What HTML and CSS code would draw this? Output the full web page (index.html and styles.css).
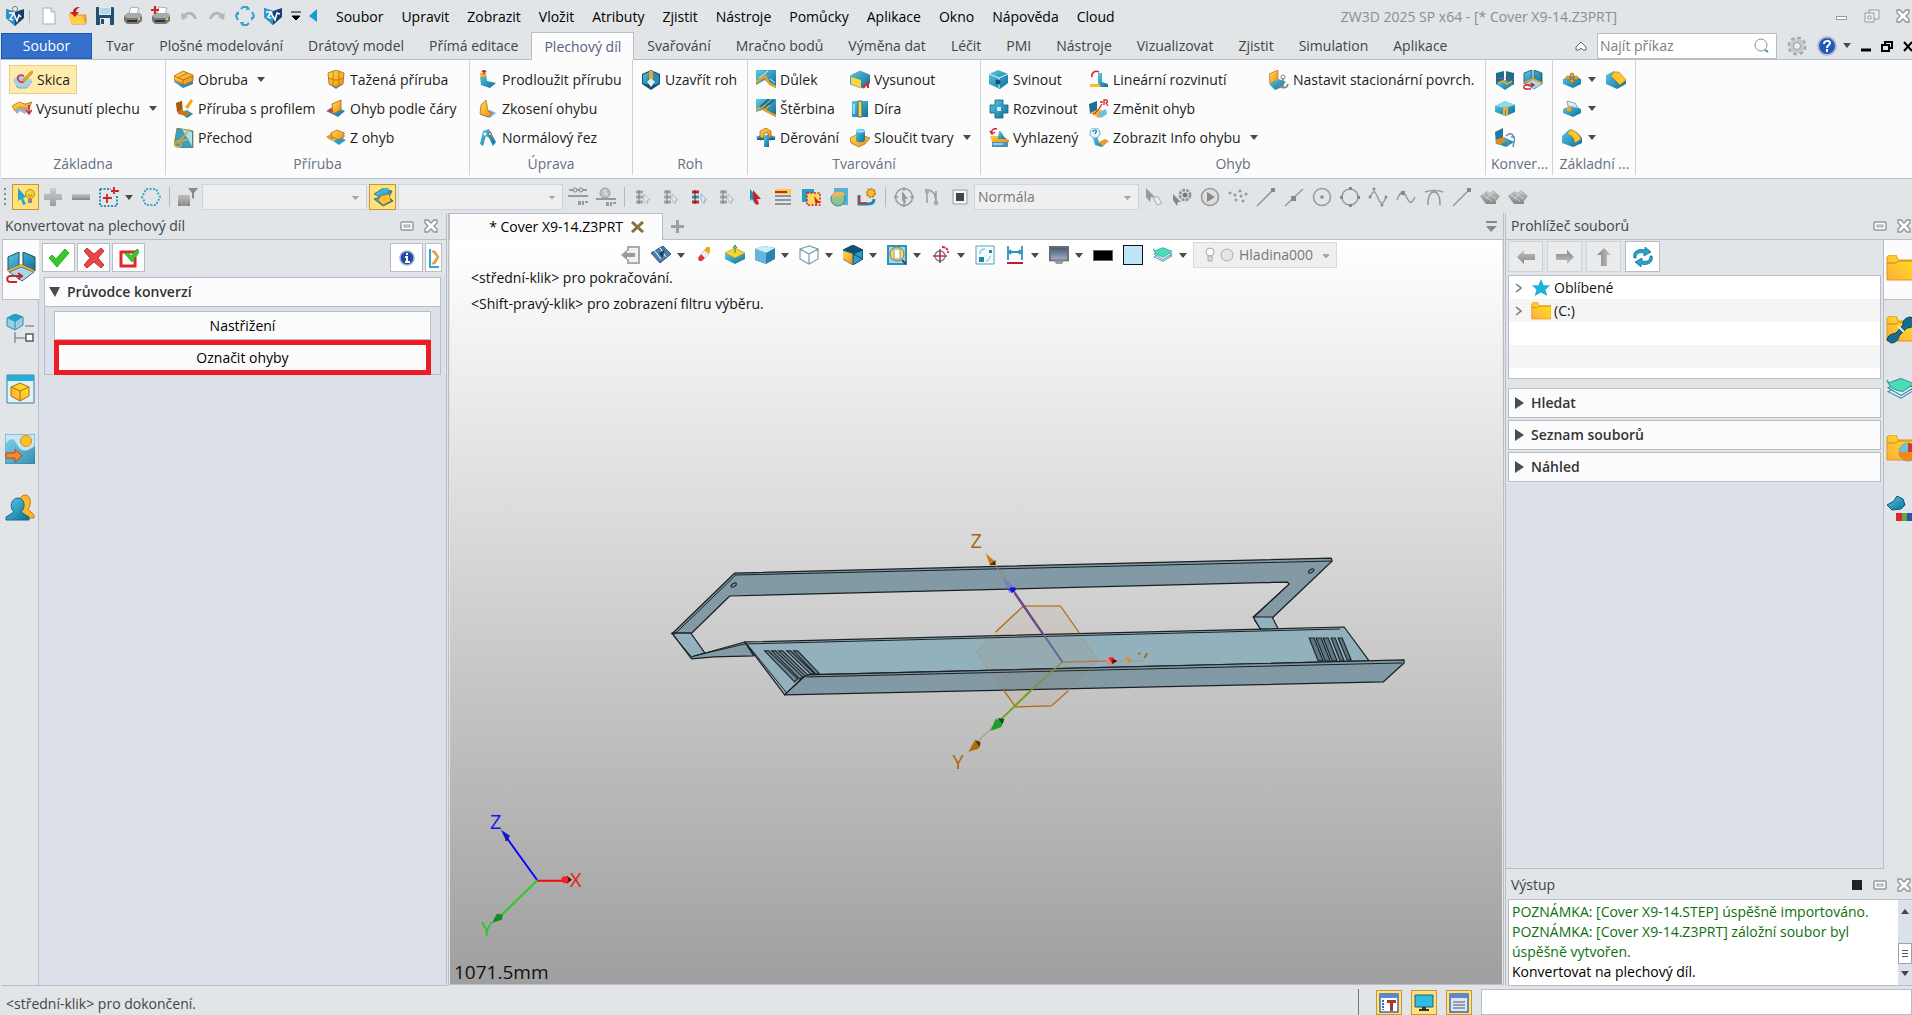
FILE: index.html
```html
<!DOCTYPE html>
<html lang="cs">
<head>
<meta charset="utf-8">
<title>ZW3D 2025 SP x64 - [* Cover X9-14.Z3PRT]</title>
<link rel="stylesheet" href="styles.css">
</head>
<body>
<svg class="sprite" aria-hidden="true">
<defs>
<linearGradient id="gt" x1="0" y1="0" x2="1" y2="1"><stop offset="0" stop-color="#5cc9e6"/><stop offset="1" stop-color="#0b6f98"/></linearGradient>
<linearGradient id="go" x1="0" y1="0" x2="1" y2="1"><stop offset="0" stop-color="#ffdc52"/><stop offset="1" stop-color="#ee8d14"/></linearGradient>
<linearGradient id="gf" x1="0" y1="1" x2="1" y2="0"><stop offset="0" stop-color="#ffab3d"/><stop offset="1" stop-color="#ffe81c"/></linearGradient>
<linearGradient id="gg" x1="0" y1="0" x2="0" y2="1"><stop offset="0" stop-color="#c4c4c4"/><stop offset="1" stop-color="#868686"/></linearGradient>
<linearGradient id="gs" x1="0" y1="0" x2="0" y2="1"><stop offset="0" stop-color="#44536f"/><stop offset="1" stop-color="#a5b2cc"/></linearGradient>
</defs>
<symbol id="logo" viewBox="0 0 20 20"><path d="M1 3l9 3 9-3v9l-9 8-9-8z" fill="#14406f"/><path d="M1 3l9 3v14l-9-8z" fill="#2e93c4"/><path d="M4 7h5l-4 6 3 1M9 8l3 7 2-6 2 2" fill="none" stroke="#fff" stroke-width="1.5"/><circle cx="10" cy="3" r="2.500" fill="#eee" stroke="#777"/></symbol>
<symbol id="zw" viewBox="0 0 20 20"><path d="M1 2l9 3 9-3v9l-9 8-9-8z" fill="#153f78"/><path d="M1 2l9 3v14l-9-8z" fill="#2c9bcf"/><path d="M3 6h5l-3 5 3 1M8 7l4 7 2-7 3 1" fill="none" stroke="#fff" stroke-width="1.6"/></symbol>
<symbol id="new" viewBox="0 0 20 20"><path d="M4 2h8l4 4v12H4z" fill="#fff" stroke="#a5adb5"/><path d="M12 2v4h4" fill="#e3e8ec" stroke="#a5adb5"/></symbol>
<symbol id="open" viewBox="0 0 20 20"><path d="M3 7h6l2 2h8v9H5z" fill="url(#go)" stroke="#d78a12" stroke-width=".8"/><path d="M1 9l4 9h14l-4-8z" fill="#ffcf45"/><path d="M13 1c-5 0-7 2-7 5H3l5 5 4-5H9c0-2 1-3 4-5z" fill="#cf1f25"/></symbol>
<symbol id="save" viewBox="0 0 20 20"><path d="M1 1h17l1 1v17H1z" fill="#24506f"/><path d="M4 1h12v8H4z" fill="#d9edf6"/><path d="M5 3h10M5 5h10M5 7h10" stroke="#8ec2da"/><path d="M5 12h10v7H5z" fill="#e8e8e8"/><path d="M6 13h3v5H6z" fill="#24506f"/></symbol>
<symbol id="print" viewBox="0 0 20 20"><path d="M6 7l2-6 8 1-2 6z" fill="#fff" stroke="#999" stroke-width=".8"/><path d="M1 10l4-3h12l2 3v5l-4 3H4l-3-3z" fill="#777"/><path d="M1 10l4-3h12l2 3-3 2H4z" fill="#aaa"/><path d="M4 14h10v2H4z" fill="#333"/><path d="M15 12h2v2h-2z" fill="#e7d54a"/></symbol>
<symbol id="printp" viewBox="0 0 20 20"><use href="#print"/><path d="M4 0v8M0 4h8" stroke="#d2232a" stroke-width="2.2"/></symbol>
<symbol id="undo" viewBox="0 0 20 20"><path d="M2 7l1 7 6-3-2-1c2-2 6-2 8 3h3C16 5 9 4 5 8z" fill="#b4b7b9"/></symbol>
<symbol id="redo" viewBox="0 0 20 20"><path d="M18 7l-1 7-6-3 2-1c-2-2-6-2-8 3H2C4 5 11 4 15 8z" fill="#b4b7b9"/></symbol>
<symbol id="cycle" viewBox="0 0 20 20"><g fill="none" stroke="#35a5c9" stroke-width="2"><path d="M6 3l2-2h4l2 2M17 6l2 4-2 3M14 17l-2 2H8l-2-2M3 14l-2-4 2-4"/></g><path d="M12 0l3 4h-4zM20 11l-4 4v-4zM8 20l-3-4h4zM0 9l4-4v4z" fill="#35a5c9"/></symbol>
<symbol id="sketch" viewBox="0 0 20 20"><path d="M0 10l6-6 13 6-6 8H4z" fill="#a9cfe5"/><path d="M3 16l3 2h8l5-7" fill="none" stroke="#7da9c4"/><path d="M11 6c-5-3-8 2-5 5s6 0 6-3" fill="none" stroke="#cc3340" stroke-width="1.6"/><path d="M9 11l8-9 3-1-1 3-8 8z" fill="#f3a51d" stroke="#b97111" stroke-width=".5"/></symbol>
<symbol id="extr" viewBox="0 0 20 20"><path d="M0 7l7-4 6 2 7-2-3 6-4 1-6-2-4 4z" fill="url(#go)" stroke="#a56615" stroke-width=".7"/><path d="M3 12l4-4 6 2 4-1-4 6-5-3-3 3z" fill="#9db0bb"/><path d="M17 6v8M14 11l3 4 3-4" fill="none" stroke="#cf2931" stroke-width="1.6"/></symbol>
<symbol id="flange" viewBox="0 0 20 20"><path d="M0 12l9 6 10-4v-3l-9 3-9-4z" fill="url(#gt)"/><path d="M0 6l9-5 10 4v6l-9 4-10-5z" fill="url(#go)" stroke="#a8660d" stroke-width=".8"/><path d="M0 6l9 4 10-4M9 10v5M4 8l9-5" fill="none" stroke="#a8660d" stroke-width=".8"/></symbol>
<symbol id="prof" viewBox="0 0 20 20"><path d="M5 13l8 6 6-4-6-4z" fill="url(#gt)"/><path d="M2 4l6-2 1 10 8 2-5 3-8-2z" fill="#c9751a"/><path d="M2 4l6-2v8l-5 3z" fill="#a8570e"/><path d="M11 8l6-8 2 2-5 8z" fill="#f6a51c"/></symbol>
<symbol id="loft" viewBox="0 0 20 20"><path d="M3 0l16 3v17H8L0 17z" fill="#3f9fb5" stroke="#75591e" stroke-width=".6"/><path d="M8 1l10 3v14z" fill="#a6e4ef"/><path d="M16 1L3 16M8 13l7-2" stroke="#e8a73a" stroke-width="1.4"/><circle cx="4" cy="16" r="3" fill="none" stroke="#e3a030" stroke-width="1.6"/></symbol>
<symbol id="swept" viewBox="0 0 20 20"><path d="M3 14l7 5 7-5v-2H3z" fill="#3d93b5"/><path d="M2 3l8-3 8 3-1 11-7 3-7-3z" fill="url(#go)" stroke="#a8660d" stroke-width=".8"/><path d="M2 8l6 2h4l6-2M7 1v14M13 1v14" stroke="#b97111" fill="none" stroke-width=".8"/></symbol>
<symbol id="bendl" viewBox="0 0 20 20"><path d="M0 12l8-5 11 5-7 6z" fill="url(#gt)"/><path d="M1 12l4-3 2 4-2 1z" fill="#d73a40"/><path d="M6 5l9-4v10l-8 4z" fill="url(#go)" stroke="#a8660d" stroke-width=".8"/></symbol>
<symbol id="zbend" viewBox="0 0 20 20"><path d="M7 13l7-4 6 3-7 5z" fill="#25a4c8"/><path d="M0 9l6-4 6 4-6 4z" fill="#e19a2c"/><path d="M5 5l6-3 7 3v4l-6 3-6-3z" fill="url(#go)" stroke="#a8660d" stroke-width=".8"/></symbol>
<symbol id="ext" viewBox="0 0 20 20"><path d="M2 7l6-4 1 8 9 2-6 5-9-3z" fill="url(#gt)"/><path d="M2 3l6-1v4L3 8z" fill="#f5ad25"/><path d="M6 0v4M4 2l2-2 2 2" stroke="#d2232a" fill="none" stroke-width="1.4"/></symbol>
<symbol id="taper" viewBox="0 0 20 20"><path d="M6 13l6-2 6 3-6 5-9-3z" fill="#7db5d5"/><path d="M2 15l1-9 5-5 2 11 4 2-4 4z" fill="url(#go)" stroke="#a8570e" stroke-width=".7"/></symbol>
<symbol id="ncut" viewBox="0 0 20 20"><path d="M2 16L5 3l6-2 7 13-3 4-4-8-3-2-3 10z" fill="url(#gt)"/><circle cx="7" cy="6" r="1.5" fill="#fff"/><circle cx="12" cy="6" r="1.5" fill="#fff" stroke="#a8570e"/></symbol>
<symbol id="corner" viewBox="0 0 20 20"><path d="M1 4l9-4 9 4v10l-9 6-9-6z" fill="#1c4c6b"/><path d="M2 5l8-4v9l-4 5-4-2z" fill="url(#gt)"/><path d="M18 5l-8-4v9l4 5 4-2z" fill="#2391b9"/><path d="M6 12l4-4 4 4-4 5z" fill="#d6eef7"/><path d="M8 1h4v8H8z" fill="#f3a51d"/></symbol>
<symbol id="dimple" viewBox="0 0 20 20"><path d="M0 0h20v18l-6-3-5-5-9 5z" fill="url(#gt)"/><path d="M0 12l9-6 4 7 7 4" stroke="#f0a01e" stroke-width="2.4" fill="none"/><path d="M3 8l9-7M14 9l5 4" stroke="#d6f2fa"/></symbol>
<symbol id="louver" viewBox="0 0 20 20"><path d="M0 0h20v18l-6-3-5-5-9 3z" fill="url(#gt)"/><path d="M0 11l7-4h5l-4 4 12 6" stroke="#f0a01e" stroke-width="2.2" fill="none"/><path d="M4 8l9-8M8 9l10-8" stroke="#16566f" stroke-width="1.4"/></symbol>
<symbol id="punch" viewBox="0 0 20 20"><path d="M0 9l5-2v6zM20 9l-6-2v6z" fill="#2393b9"/><path d="M1 11h18" stroke="#156a8c" stroke-width="2"/><path d="M4 9V3l6-3 5 3v7h-3V5H8v5z" fill="url(#go)" stroke="#a8570e" stroke-width=".7"/><path d="M8 7h5v12H8z" fill="url(#gt)"/></symbol>
<symbol id="vys" viewBox="0 0 20 20"><path d="M0 6l10-5 10 4v8l-9 5L0 14z" fill="url(#gt)" stroke="#25708c" stroke-width=".5"/><path d="M1 7l10 3v8L1 14z" fill="#ffd63a"/><path d="M13 18l5-5v5" stroke="#cf2931" fill="none" stroke-width="2"/></symbol>
<symbol id="dira" viewBox="0 0 20 20"><path d="M2 2h16v16H2z" fill="url(#gt)"/><path d="M8 2h4v16H8z" fill="#f7d43e" stroke="#2f6d80"/><path d="M4 5v10" stroke="#fff" stroke-opacity=".5" stroke-width="2"/></symbol>
<symbol id="merge" viewBox="0 0 20 20"><path d="M0 10l8-4 12 4-5 6-6 3-8-4z" fill="url(#go)" stroke="#a8660d" stroke-width=".7"/><path d="M6 3c0-3 9-3 9 0v9c0 3-9 3-9 0z" fill="url(#gt)"/><ellipse cx="10.500" cy="3" rx="4.500" ry="1.700" fill="#8be0f2"/></symbol>
<symbol id="fold" viewBox="0 0 20 20"><path d="M0 4l9-4 10 4v9l-8 6L0 14z" fill="url(#gt)"/><path d="M0 4l10 4 9-4M10 8v10" stroke="#dff6fc" fill="none"/><circle cx="9" cy="12" r="2.500" fill="#0d5674"/></symbol>
<symbol id="unfold" viewBox="0 0 20 20"><path d="M6 1h8v5h5v8h-5v5H6v-5H1V6h5z" fill="url(#gt)" stroke="#0d5f80" stroke-width=".8"/><path d="M8 8h4v4H8z" fill="#c9eef7"/></symbol>
<symbol id="smooth" viewBox="0 0 20 20"><path d="M3 14h16v5H3z" fill="#4b94bd"/><path d="M4 16h10" stroke="#fff"/><path d="M1 8h9V4l4 5 6 3v2H3z" fill="url(#go)"/><path d="M10 3c4 0 3 6 8 8H9z" fill="url(#gt)"/><path d="M8 1C5 0 2 2 3 5M1 3l2 3 3-2" stroke="#cf2931" fill="none" stroke-width="1.5"/></symbol>
<symbol id="linun" viewBox="0 0 20 20"><path d="M1 14h10l3 3H1z" fill="#f9c02a"/><path d="M9 3h4v9l6 2v3h-7l-3-4z" fill="url(#gt)"/><path d="M10 2C6 0 2 3 3 7" stroke="#cf2931" stroke-width="1.6" fill="none"/></symbol>
<symbol id="chb" viewBox="0 0 20 20"><path d="M0 5l8-3v10l-7 3z" fill="#1e6e93"/><path d="M1 14l9-4 7 3-7 6z" fill="url(#go)"/><path d="M9 14l8-4 1 5-6 4z" fill="#70bde0"/><path d="M4 15C9 13 11 8 13 5M11 3h3M15 6V1h2c2 0 2 3 0 3l2 3" stroke="#cf2931" stroke-width="1.300" fill="none"/></symbol>
<symbol id="info" viewBox="0 0 20 20"><path d="M4 10l4-3 2 8 9-2-6 6-7-2z" fill="url(#gt)"/><path d="M10 14l6-3 4 2-7 5z" fill="#ef9b1c"/><circle cx="6" cy="5" r="5" fill="#e4f4fb" stroke="#6eaecb"/><path d="M4 4c0-3 5-2 3 0l-1 2" stroke="#2b82a8" stroke-width="1.300" fill="none"/></symbol>
<symbol id="stat" viewBox="0 0 20 20"><path d="M0 4l9-4v9l-8 5z" fill="url(#go)" stroke="#a8570e" stroke-width=".6"/><path d="M0 14l10-5 7 3-6 6-5 2z" fill="url(#gt)"/><path d="M14 8v10M10 14c1 5 8 5 9 0" stroke="#78858c" stroke-width="1.600" fill="none"/><circle cx="14" cy="7" r="2" fill="none" stroke="#78858c"/></symbol>
<symbol id="kv1" viewBox="0 0 20 20"><path d="M1 3l8-2v10l-8 4zM19 3l-8-2v10l8 4z" fill="#1b6f93"/><path d="M1 14l9-4 9 4-9 6z" fill="url(#gt)"/><path d="M3 13l5-2 4 3 5-3" stroke="#f3a51d" stroke-width="1.600" fill="none"/><path d="M4 8h12" stroke="#d94b4b" stroke-dasharray="2 1"/></symbol>
<symbol id="kv2" viewBox="0 0 20 20"><path d="M1 3l8-3v10l-8 4zM19 3l-8-3v10l8 4z" fill="url(#gt)" stroke="#164e68" stroke-width=".8"/><path d="M10 9l9 4v1l-8 5-9-5z" fill="#a9d7ee" stroke="#2f6d88" stroke-width=".6"/><path d="M1 13l9-4 9 4" stroke="#f0a01e" fill="none" stroke-width="1.600"/><path d="M11 15H3c-3 0-3 4 0 4h5M8 13l3 2-3 2" stroke="#c8242c" stroke-width="1.300" fill="none"/></symbol>
<symbol id="kv3" viewBox="0 0 20 20"><path d="M0 7l10-5 10 4v7l-9 4-11-4z" fill="url(#gt)"/><path d="M0 7l10 2 10-3-10-4z" fill="#8bdcef"/><path d="M8 17v-8c2-2 4-2 5 0v8h-2v-6h-1v6z" fill="#f5b22a"/></symbol>
<symbol id="kv4" viewBox="0 0 20 20"><path d="M0 4l8-4v10l-7 6z" fill="#1f7ba2"/><path d="M0 15l9-6 10 5-8 5z" fill="url(#gt)"/><path d="M0 12l9-3 2 4-8 4z" fill="#e38a1b"/><path d="M11 8c4-4 8-2 7 2M16 9h4l-2 10M13 12v6" stroke="#5b98b9" stroke-width="1.600" fill="none"/></symbol>
<symbol id="z1" viewBox="0 0 20 20"><path d="M1 9l9-4 9 4v5l-8 4-10-4z" fill="url(#gt)"/><g fill="#f3a51d" stroke="#a8570e" stroke-width=".6"><circle cx="6" cy="8" r="2"/><circle cx="14" cy="8" r="2"/><circle cx="10" cy="5" r="2"/><circle cx="10" cy="11" r="2"/></g></symbol>
<symbol id="z2" viewBox="0 0 20 20"><path d="M1 10l9-4 9 4v4l-8 4-10-4z" fill="url(#gt)"/><path d="M5 2l8 2 3 5-10-2z" fill="#dcebf4" stroke="#8fa9b8"/><circle cx="7" cy="10" r="2.500" fill="#f3a51d"/></symbol>
<symbol id="z3" viewBox="0 0 20 20"><path d="M0 8l8-7 8 4 4 5v5l-9 4-11-4z" fill="url(#gt)"/><path d="M8 2c5 0 9 4 11 9l-6 4c-1-5-3-8-8-9z" fill="#ffc62c" stroke="#b97111" stroke-width=".6"/></symbol>
<symbol id="z4" viewBox="0 0 20 20"><path d="M0 5l8-4 12 10v3l-9 5-11-5z" fill="url(#gt)"/><path d="M8 2l5 0 7 8-6 5-9-9z" fill="#ffc62c" stroke="#b97111" stroke-width=".6"/></symbol>
<symbol id="tip" viewBox="0 0 20 20"><path d="M2 1l8 9-3 1 3 6-3 1-2-6-3 2z" fill="#22a8d2"/><circle cx="14" cy="7" r="4.500" fill="#f7cf36" stroke="#b98a18"/><path d="M12 12h4v4h-4z" fill="#888"/><path d="M12 7l2 3 2-3" stroke="#b98a18" fill="none"/></symbol>
<symbol id="plus" viewBox="0 0 20 20"><path d="M7 1h6v6h6v6h-6v6H7v-6H1V7h6z" fill="url(#gg)" opacity=".75"/></symbol>
<symbol id="minus" viewBox="0 0 20 20"><path d="M1 7h18v6H1z" fill="url(#gg)"/></symbol>
<symbol id="dash" viewBox="0 0 20 20"><path d="M1 2h11M1 2v17h17V8" fill="none" stroke="#3390b4" stroke-width="2" stroke-dasharray="2 1.500"/><path d="M8 7v9M4 11h9M15 0v7M12 4h8" stroke="#d2232a" stroke-width="1.800"/></symbol>
<symbol id="hex" viewBox="0 0 20 20"><path d="M5 2h10l4 8-4 8H5l-4-8z" fill="none" stroke="#43a5c3" stroke-width="2" stroke-dasharray="2 1.500"/></symbol>
<symbol id="filt" viewBox="0 0 20 20"><path d="M0 8h12v11H0z" fill="url(#gg)"/><path d="M4 8v11M8 8v11" stroke="#aaa"/><path d="M10 1h10l-4 5v6l-2-1V6z" fill="#8a8a8a"/></symbol>
<symbol id="plane" viewBox="0 0 20 20"><path d="M1 7l8-5 10 2-3 6 4 4-10 5-9-7 6-2z" fill="url(#gt)" stroke="#165b78" stroke-width=".7"/><path d="M8 9l8-2 2 7-8 4-5-5z" fill="#ffc436" stroke="#a8660d" stroke-width=".6"/><path d="M8 1h8l-3 5z" fill="#3cb8dc"/></symbol>
<symbol id="ref1" viewBox="0 0 20 20"><path d="M1 3h18M0 9h20" stroke="#999" stroke-width="2"/><circle cx="7" cy="3" r="2" fill="#ddd" stroke="#888"/><circle cx="13" cy="3" r="2" fill="#ddd" stroke="#888"/><path d="M10 14h3v4h-3zM14 14h2v4h-2zM17 14h3v2h-3v2" fill="#999"/></symbol>
<symbol id="ref2" viewBox="0 0 20 20"><circle cx="9" cy="6" r="5" fill="#c3c3c3" stroke="#999"/><path d="M9 3v4h3" stroke="#eee" fill="none"/><path d="M0 12h20" stroke="#999" stroke-width="2"/><path d="M10 15h3v4h-3zM14 15h2v4h-2zM17 15h3v2h-3v2" fill="#999"/></symbol>
<symbol id="lst" viewBox="0 0 20 20"><path d="M3 5h7M3 10h7M3 15h7" stroke="#a3a3a3" stroke-width="3"/><path d="M6 3v14" stroke="#777"/><path d="M11 7l6 6-3 0 1 3-2 0-2-3z" fill="#e8e8e8" stroke="#aaa" stroke-width=".8"/></symbol>
<symbol id="lstr" viewBox="0 0 20 20"><path d="M3 5h7M3 15h7" stroke="#d2232a" stroke-width="3"/><path d="M3 10h7" stroke="#3a92b3" stroke-width="3"/><path d="M6 3v14" stroke="#333"/><path d="M12 7l6 6-3 0 1 3-2 0-2-3z" fill="#d6eef7" stroke="#7bacc0" stroke-width=".8"/></symbol>
<symbol id="cur" viewBox="0 0 20 20"><path d="M5 2l5 6v9l-3-5-2 2z" fill="#1d91bd"/><path d="M8 3l8 9h-4l2 5-3 1-3-7z" fill="#c8242c"/></symbol>
<symbol id="sheet" viewBox="0 0 20 20"><path d="M2 2h16v5H2z" fill="#f8cf3b"/><path d="M2 5h12" stroke="#c8242c" stroke-width="2"/><path d="M2 9h16M2 13h16M2 17h16" stroke="#8e969c" stroke-width="2"/></symbol>
<symbol id="pick" viewBox="0 0 20 20"><path d="M1 2h12v13H1z" fill="#2b9cc2"/><path d="M6 6h13v12H6z" fill="#ffd95c" stroke="#d2232a" stroke-dasharray="2 1.500" stroke-width="1.500"/><path d="M13 9l6 7-3 0-1 3z" fill="#c8242c"/></symbol>
<symbol id="globe" viewBox="0 0 20 20"><path d="M5 1h14v17H5z" fill="#56b2d2"/><circle cx="9" cy="12" r="7" fill="#8dc38e" stroke="#35809c"/><path d="M3 8c3-5 11-4 13-1l-3 3c-3-2-7-1-9 2z" fill="#f2b558"/></symbol>
<symbol id="gearl" viewBox="0 0 20 20"><path d="M2 8v9h9c5 0 6-3 6-5" fill="none" stroke="#2785a9" stroke-width="3"/><path d="M2 9v7h8" stroke="#cf2931" stroke-width="1.500" fill="none"/><circle cx="14" cy="6" r="4" fill="#f9c02a" stroke="#cc7a10" stroke-width="2" stroke-dasharray="2 1"/></symbol>
<symbol id="ccur" viewBox="0 0 20 20"><circle cx="10" cy="10" r="8.500" fill="none" stroke="#999" stroke-width="1.500"/><path d="M10 0v4M10 16v4M0 10h4M16 10h4" stroke="#999" stroke-width="1.500"/><path d="M8 4l6 8h-3l1 4-2 0-2-3z" fill="#999"/></symbol>
<symbol id="nn" viewBox="0 0 20 20"><path d="M5 16V3c6 0 9 4 9 13V4" fill="none" stroke="#999" stroke-width="1.500"/><path d="M3 2h4v4H3zM12 14h4v4h-4z" fill="#aaa"/></symbol>
<symbol id="sq" viewBox="0 0 20 20"><path d="M3 3h14v14H3z" fill="#f5f5f5" stroke="#999"/><path d="M6 6h8v8H6z" fill="#444"/></symbol>
<symbol id="gcur" viewBox="0 0 20 20"><path d="M2 1l9 9H7l-1 5-4-5z" fill="#999"/><path d="M9 10l4 8 5-2-4-6z" fill="#ececec" stroke="#aaa"/></symbol>
<symbol id="gset" viewBox="0 0 20 20"><path d="M1 7l8 8H6l-1 4-4-6z" fill="#888"/><circle cx="13" cy="8" r="5" fill="#eee" stroke="#999" stroke-width="3" stroke-dasharray="3 1"/><circle cx="13" cy="8" r="2.500" fill="#777"/></symbol>
<symbol id="play" viewBox="0 0 20 20"><circle cx="10" cy="10" r="8.500" fill="#ddd" stroke="#999" stroke-width="1.600"/><path d="M7 5l8 5-8 5z" fill="#888"/></symbol>
<symbol id="dots" viewBox="0 0 20 20"><g fill="#999"><circle cx="2" cy="6" r="1.500"/><circle cx="7" cy="8" r="1.500"/><circle cx="12" cy="4" r="1.500"/><circle cx="18" cy="7" r="1.500"/><circle cx="8" cy="13" r="1.500"/><circle cx="13" cy="9" r="1.500"/><circle cx="15" cy="14" r="1.500"/></g></symbol>
<symbol id="ln1" viewBox="0 0 20 20"><path d="M1 19L17 3" stroke="#999" stroke-width="1.600"/><path d="M15 1h4v4h-4z" fill="#888"/></symbol>
<symbol id="ln2" viewBox="0 0 20 20"><path d="M1 19L19 2" stroke="#999" stroke-width="1.600"/><path d="M7 9h5v5H7z" fill="#888"/></symbol>
<symbol id="cc" viewBox="0 0 20 20"><circle cx="10" cy="10" r="8.500" fill="none" stroke="#999" stroke-width="1.500"/><circle cx="10" cy="10" r="1.800" fill="#888"/></symbol>
<symbol id="cq" viewBox="0 0 20 20"><circle cx="10" cy="10" r="8" fill="none" stroke="#999" stroke-width="1.500"/><path d="M9 0h3v3H9zM9 17h3v3H9zM0 9h3v3H0zM17 9h3v3h-3z" fill="#888"/></symbol>
<symbol id="wv1" viewBox="0 0 20 20"><path d="M2 10c4-8 5-6 8 1s5 7 8-1" fill="none" stroke="#999" stroke-width="1.500"/><circle cx="6" cy="2" r="1.500" fill="#888"/><circle cx="14" cy="18" r="1.500" fill="#888"/><circle cx="2" cy="10" r="1.500" fill="#888"/><circle cx="18" cy="10" r="1.500" fill="#888"/></symbol>
<symbol id="wv2" viewBox="0 0 20 20"><path d="M1 13C5 3 7 3 11 11s5 4 8-1" fill="none" stroke="#999" stroke-width="1.500"/><path d="M5 4h4v4H5z" fill="#888"/></symbol>
<symbol id="arc" viewBox="0 0 20 20"><path d="M1 5c5-2 13-2 18 0M4 18c0-10 3-13 6-13s6 3 6 13" fill="none" stroke="#999" stroke-width="1.600"/></symbol>
<symbol id="srf" viewBox="0 0 20 20"><path d="M0 9l7-5 3 2 3-3 7 6-4 5v3H6z" fill="url(#gg)"/><path d="M3 8l9 6M7 6l9 6M6 12l8-7" stroke="#ddd" stroke-width=".8"/></symbol>
<symbol id="float" viewBox="0 0 14 14"><rect x="1" y="3" width="12" height="8" rx="1" fill="#fff" stroke="#959a9e" stroke-width="1.500"/><rect x="4" y="6" width="6" height="2" fill="#eee" stroke="#999"/></symbol>
<symbol id="close" viewBox="0 0 14 14"><path d="M1 1h3l3 3 3-3h3v3l-3 3 3 3v3h-3l-3-3-3 3H1v-3l3-3-3-3z" fill="#fdfdfd" stroke="#8f9397" stroke-width="1.300"/></symbol>
<symbol id="rest" viewBox="0 0 16 16"><path d="M5 2h10v9H5z" fill="#eee" stroke="#999"/><path d="M1 5h9v9H1z" fill="#eee" stroke="#999"/><path d="M4 8h3v3H4z" fill="#fff" stroke="#999"/></symbol>
<symbol id="gear" viewBox="0 0 20 20"><circle cx="10" cy="10" r="8" fill="none" stroke="#a4a7a9" stroke-width="3" stroke-dasharray="3.600 2.680"/><circle cx="10" cy="10" r="5.500" fill="none" stroke="#c6c9cb" stroke-width="4"/><circle cx="10" cy="10" r="3.500" fill="#eee" stroke="#999"/></symbol>
<symbol id="help" viewBox="0 0 20 20"><circle cx="10" cy="10" r="9" fill="#2855b8" stroke="#aebdd6" stroke-width="2"/><path d="M7 8c0-4 6-4 6-1 0 2-3 2-3 5M10 13v3" stroke="#fff" stroke-width="2" fill="none"/></symbol>
<symbol id="tree" viewBox="0 0 30 30"><path d="M2 4l8-4 8 3v8l-8 5-8-4z" fill="#9ad0e6" stroke="#3587a8"/><path d="M2 4l8 4 8-5-8-3z" fill="#1ea0c8"/><path d="M10 8v8" stroke="#3587a8"/><path d="M20 12h9M10 18v11M10 24h10" stroke="#8a97a3" stroke-width="1.600"/><path d="M21 20h7v7h-7z" fill="#fff" stroke="#47606f" stroke-width="1.500"/></symbol>
<symbol id="view" viewBox="0 0 30 30"><path d="M2 1h27v28H2z" fill="#def2fa" stroke="#3d7f98"/><path d="M2 1h27v6H2z" fill="#25afd3"/><path d="M6 13l9-4 9 4v9l-9 5-9-5z" fill="url(#gf)" stroke="#b46a12"/><path d="M6 13l9 4 9-4M15 17v10" stroke="#b46a12" fill="none"/></symbol>
<symbol id="scene" viewBox="0 0 30 30"><path d="M0 0h30v30H0z" fill="#c7e6f3" stroke="#5f9ab0"/><path d="M0 10c8-9 9-4 13 2s8 6 17 0v18H0z" fill="url(#gt)" opacity=".75"/><circle cx="21" cy="7" r="5.500" fill="#fbc02b" stroke="#dd8a15"/><path d="M1 19h9v-4l7 7-7 6v-4H1z" fill="#f58a2c" stroke="#c6420e"/></symbol>
<symbol id="users" viewBox="0 0 30 30"><path d="M20 1c6 0 7 9 3 14l6 6v3H14c0-8-2-23 6-23z" fill="#fbb928" stroke="#c97a12"/><path d="M13 4c7 0 8 10 3 14l8 5v3H1v-3l8-5C4 14 6 4 13 4z" fill="url(#gt)" stroke="#1a6b88"/></symbol>
<symbol id="conv" viewBox="0 0 30 32"><path d="M2 5l11-5v13L2 19zM29 5L17 0v13l12 6z" fill="url(#gt)" stroke="#164e68"/><path d="M15 15l13 5-12 9L3 20z" fill="#a9d7ee" stroke="#2f6d88"/><path d="M2 19l13-6 13 6" stroke="#f0a01e" fill="none" stroke-width="2"/><path d="M16 24H5c-5 0-5 6 0 6h6M12 21l4 3-4 3" stroke="#c8242c" stroke-width="2" fill="none"/></symbol>
<symbol id="ok" viewBox="0 0 20 20"><path d="M0 10l3-3 4 4 9-10 4 4L8 19z" fill="#35cc2b" stroke="#1f9a1d" stroke-width=".8"/></symbol>
<symbol id="no" viewBox="0 0 20 20"><path d="M3 0l7 6 7-6 3 3-6 7 6 7-3 3-7-6-7 6-3-3 6-7-6-7z" fill="#e8474a" stroke="#a91d22" stroke-width=".8"/></symbol>
<symbol id="okn" viewBox="0 0 20 20"><path d="M2 4h14v14H2z" fill="#fff" stroke="#e0262d" stroke-width="3"/><path d="M6 6l3-2 3 4 6-7 3 2-8 11z" fill="#35cc2b" stroke="#1f9a1d" stroke-width=".6"/></symbol>
<symbol id="inf" viewBox="0 0 16 16"><circle cx="8" cy="8" r="7" fill="#1c48b0" stroke="#a9b2c4" stroke-width="1.500"/><path d="M8 3v2M6 7h2v5M6 12h5" stroke="#fff" stroke-width="2" fill="none"/></symbol>
<symbol id="col" viewBox="0 0 12 20"><path d="M2 1v18h9" stroke="#35a5c9" stroke-width="2" fill="none"/><path d="M4 3l5 6-5 7h3l4-7-4-6z" fill="#f3a54a" stroke="#c97a2a" stroke-width=".6"/></symbol>
<symbol id="exit" viewBox="0 0 20 20"><path d="M7 6V2h11v16H7v-4" fill="#f1f1f1" stroke="#aaa" stroke-width="2"/><path d="M0 10l6-5v3h8v4H6v3z" fill="#999"/></symbol>
<symbol id="vcube" viewBox="0 0 20 20"><path d="M0 8l12-7 8 8-11 9z" fill="#4d7fae" stroke="#34597c"/><path d="M3 5l7 9M9 3l6 9" stroke="#fff"/><path d="M8 8l6-3-3 8z" fill="#1c3e63"/></symbol>
<symbol id="eraser" viewBox="0 0 20 20"><path d="M3 13l3-4 4 4-3 3H4z" fill="#dc3b33"/><path d="M6 9l3-4 5 4-4 4z" fill="#eee" stroke="#aaa" stroke-width=".5"/><path d="M9 5l3-3h3v4l-1 3z" fill="#f4a61d"/></symbol>
<symbol id="sec" viewBox="0 0 20 20"><path d="M0 8l10 4 10-4v6l-10 5-10-5z" fill="url(#gt)"/><path d="M0 8l10-5 10 5-10 5z" fill="#f7d338" stroke="#a58a16" stroke-width=".6"/><path d="M10 8V1M8 3l2-3 2 3" stroke="#268a34" fill="none"/></symbol>
<symbol id="shade" viewBox="0 0 20 20"><path d="M0 4l9-3 11 2v11l-9 5-11-4z" fill="#2c83b2"/><path d="M0 4l9-3 11 2-9 5z" fill="#cbeafa"/><path d="M0 4l11 4v11L0 15z" fill="#64b5dc"/></symbol>
<symbol id="wire" viewBox="0 0 20 20"><path d="M1 4l9-3 9 3v10l-9 5-9-5zM1 4l9 5 9-5M10 9v10" fill="#fff" stroke="#7b9db0" stroke-width="1.200"/></symbol>
<symbol id="hcube" viewBox="0 0 20 20"><path d="M0 5l10-5 10 5v9l-10 6-10-6z" fill="#2a9ec7" stroke="#124c66"/><path d="M0 5l10-5 10 5-10 4z" fill="#14506e"/><path d="M0 6l10 3v11L0 14z" fill="url(#go)"/><path d="M10 9l10-4v9zM10 9v10" stroke="#124c66" fill="none"/></symbol>
<symbol id="zoomf" viewBox="0 0 20 20"><path d="M1 1h18v18H1z" fill="#9fd8ef" stroke="#2d93b9" stroke-width="2"/><circle cx="10" cy="9" r="7" fill="#f9dc57" stroke="#777"/><path d="M7 4h6v10H7z" fill="#fff" stroke="#999"/><path d="M15 15l4 4" stroke="#444" stroke-width="2"/></symbol>
<symbol id="target" viewBox="0 0 20 20"><circle cx="9" cy="11" r="5" fill="none" stroke="#3d92b4" stroke-width="1.400"/><path d="M9 4v14M2 11h14" stroke="#cf2931" stroke-width="1.600"/><path d="M11 2c4 0 6 2 6 6" stroke="#cf2931" stroke-width="2" fill="none" stroke-dasharray="3 1"/></symbol>
<symbol id="map" viewBox="0 0 20 20"><path d="M1 1h18v18H1z" fill="#f6fbfe" stroke="#5b9fbe"/><path d="M4 12h5v5H4zM14 5h3v3h-3z" fill="#2585ac"/><path d="M5 9c0-3 2-5 5-5M15 11c0 3-2 5-4 5" stroke="#8ad0e6" fill="none" stroke-width="1.500"/></symbol>
<symbol id="dim" viewBox="0 0 20 20"><path d="M3 1v14M17 1v14M3 7h14M6 5L4 7l2 2M14 5l2 2-2 2" stroke="#2f93b7" stroke-width="1.800" fill="none"/><path d="M2 18h16" stroke="#b5242b" stroke-width="2"/></symbol>
<symbol id="mon" viewBox="0 0 22 20"><path d="M1 1h20v15H1z" fill="url(#gs)" stroke="#6d6d6d" stroke-width="2"/><path d="M5 16h12l-3 4H8z" fill="#999"/></symbol>
<symbol id="layers" viewBox="0 0 22 20"><path d="M1 12l10-5 10 4-10 6z" fill="#d8edf5" stroke="#33809c" stroke-width=".8"/><path d="M1 9l10-5 10 5-10 6z" fill="#d8edf5" stroke="#33809c" stroke-width=".8"/><path d="M0 3c2 4 4 1 11-1l10 4-9 6C5 10 3 10 0 3z" fill="#4ddcbb" stroke="#2b9c88" stroke-width=".8"/></symbol>
<symbol id="arr" viewBox="0 0 20 20"><path d="M1 10l7-7v4h11v6H8v4z" fill="url(#gg)"/></symbol>
<symbol id="refr" viewBox="0 0 22 20"><path d="M2 11C0 5 6 1 13 3V0l6 5-7 4V6C7 5 4 6 4 11zM20 9c2 6-4 10-11 8v3l-6-5 7-4v3c5 1 8 0 8-5z" fill="#1ea6cd" stroke="#0d6686" stroke-width=".7"/></symbol>
<symbol id="star" viewBox="0 0 20 20"><path d="M10 0l3 7h7l-5 5 2 7-7-4-7 4 2-7-5-5h7z" fill="#1fb1db"/></symbol>
<symbol id="folder" viewBox="0 0 30 26"><path d="M1 5V2l3-2h6l2 5h18v20H1z" fill="url(#gf)" stroke="#d99a1a"/><path d="M1 8h9l2-2h18" fill="none" stroke="#cf8518"/></symbol>
<symbol id="fbolt" viewBox="0 0 30 30"><use href="#folder" y="2" width="30" height="26"/><path d="M2 23c2-3 5-3 8-4l7-8c-1-4 3-8 8-8l4 4c0 5-4 7-8 7l-8 8c0 4-4 7-8 7l-4-3z" fill="#176c91" stroke="#0c4560"/><path d="M12 12l6 6" stroke="#dbeff7" stroke-width="2"/></symbol>
<symbol id="fball" viewBox="0 0 30 28"><use href="#folder" width="30" height="26"/><circle cx="22" cy="17" r="9" fill="#fff" stroke="#888"/><path d="M22 8a9 9 0 0 0-9 9h9z" fill="#6ec0dc"/><path d="M13 17a9 9 0 0 0 18 0z" fill="#ef8a1a"/><path d="M22 8a9 9 0 0 1 9 9h-9z" fill="#d4392c"/></symbol>
<symbol id="rgb" viewBox="0 0 30 26"><path d="M1 9l7-4 3-5 6 3 2 6-4 4-9 1z" fill="url(#gt)" stroke="#0d5674"/><path d="M10 17h6v8h-6z" fill="#e0262d"/><path d="M16 17h5v8h-5z" fill="#62a83a"/><path d="M21 17h6v8h-6z" fill="#2a52ac"/></symbol>
<symbol id="s1" viewBox="0 0 20 20"><path d="M1 1h18v18H1z" fill="#fff" stroke="#3e68b0" stroke-width="1.500"/><path d="M1 1h18v4H1z" fill="#5b87d6"/><path d="M4 7v10" stroke="#3e68b0" stroke-width="2" stroke-dasharray="2 1"/><path d="M8 7h9v3h-3v8h-3v-8H8z" fill="#a33"/></symbol>
<symbol id="s2" viewBox="0 0 20 20"><path d="M1 2h18v12H1z" fill="#2fbfe4" stroke="#275b6d"/><path d="M8 14h4v2h3v2H5v-2h3z" fill="#333"/></symbol>
<symbol id="s3" viewBox="0 0 20 20"><path d="M1 1h18v18H1z" fill="#dfe5f2" stroke="#3e68b0" stroke-width="1.500"/><path d="M1 1h18v4H1z" fill="#5b87d6"/><path d="M4 9h12M4 12h12M4 15h12" stroke="#7b879c" stroke-width="1.500"/></symbol>
</svg>

<header class="titlebar">
  <div class="qat">
    <svg class="i"><use href="#logo"/></svg><span class="vline"></span>
    <button class="ib" aria-label="Nový"><svg class="i"><use href="#new"/></svg></button>
    <button class="ib" aria-label="Otevřít"><svg class="i"><use href="#open"/></svg></button>
    <button class="ib" aria-label="Uložit"><svg class="i"><use href="#save"/></svg></button>
    <button class="ib" aria-label="Tisk"><svg class="i"><use href="#print"/></svg></button>
    <button class="ib" aria-label="Rychlý tisk"><svg class="i"><use href="#printp"/></svg></button>
    <button class="ib" aria-label="Zpět"><svg class="i"><use href="#undo"/></svg></button>
    <button class="ib" aria-label="Vpřed"><svg class="i"><use href="#redo"/></svg></button>
    <button class="ib" aria-label="Regenerovat"><svg class="i"><use href="#cycle"/></svg></button>
    <button class="ib" aria-label="ZW3D"><svg class="i"><use href="#zw"/></svg></button>
    <button class="ib" aria-label="Přizpůsobit"><svg width="10" height="10"><path d="M0 1h10M1 5h8L5 9z" stroke="#000" fill="#000"/></svg></button>
    <button class="ib" aria-label="Sbalit"><svg width="9" height="14"><path d="M8 0v13L0 7z" fill="#1e97dc"/></svg></button>
  </div>
  <nav class="menu">
    <button>Soubor</button><button>Upravit</button><button>Zobrazit</button><button>Vložit</button><button>Atributy</button><button>Zjistit</button><button>Nástroje</button><button>Pomůcky</button><button>Aplikace</button><button>Okno</button><button>Nápověda</button><button>Cloud</button>
  </nav>
  <h1 class="doc">ZW3D 2025 SP x64 - [* Cover X9-14.Z3PRT]</h1>
  <div class="wctl">
    <button class="ib" aria-label="Minimalizovat"><svg width="12" height="14"><rect x=".5" y="7.500" width="10" height="3" fill="#fff" stroke="#999"/></svg></button>
    <button class="ib" aria-label="Obnovit"><svg width="16" height="16"><use href="#rest"/></svg></button>
    <button class="ib" aria-label="Zavřít"><svg width="14" height="14"><use href="#close"/></svg></button>
  </div>
</header>

<div class="tabs">
  <button class="file">Soubor</button>
  <nav class="tablist">
    <button>Tvar</button><button>Plošné modelování</button><button>Drátový model</button><button>Přímá editace</button><button class="on">Plechový díl</button><button>Svařování</button><button>Mračno bodů</button><button>Výměna dat</button><button>Léčit</button><button>PMI</button><button>Nástroje</button><button>Vizualizovat</button><button>Zjistit</button><button>Simulation</button><button>Aplikace</button>
  </nav>
  <div class="tabend">
    <button class="ib" aria-label="Sbalit pás"><svg width="12" height="12"><path d="M1 7l5-5 5 5v3H8L6 8l-2 2H1z" fill="#fff" stroke="#666"/></svg></button>
    <label class="search"><input type="text" placeholder="Najít příkaz" aria-label="Najít příkaz"><svg width="16" height="16"><circle cx="7" cy="7" r="6" fill="none" stroke="#8b9399"/><path d="M11 12l3 2" stroke="#3a92b3" stroke-width="2"/></svg></label>
    <button class="ib" aria-label="Nastavení"><svg class="i"><use href="#gear"/></svg></button>
    <button class="ib dd" aria-label="Nápověda"><svg class="i"><use href="#help"/></svg></button>
    <button class="ib" aria-label="Minimalizovat dokument"><svg width="10" height="12"><path d="M0 10h10" stroke="#000" stroke-width="3"/></svg></button>
    <button class="ib" aria-label="Obnovit dokument"><svg width="12" height="12"><path d="M4 4V2h7v6H9M1 5h7v6H1z" fill="none" stroke="#000" stroke-width="2"/></svg></button>
    <button class="ib" aria-label="Zavřít dokument"><svg width="9" height="12"><path d="M1 2l8 9M9 2l-8 9" stroke="#000" stroke-width="2"/></svg></button>
  </div>
</div>

<section class="ribbon">
  <div class="grp g1"><div class="cols"><div class="c">
    <button class="r sel"><svg class="i"><use href="#sketch"/></svg>Skica</button>
    <button class="r dd"><svg class="i"><use href="#extr"/></svg>Vysunutí plechu</button></div></div><h2>Základna</h2></div>
  <div class="grp g2"><div class="cols"><div class="c w152">
    <button class="r dd"><svg class="i"><use href="#flange"/></svg>Obruba</button>
    <button class="r"><svg class="i"><use href="#prof"/></svg>Příruba s profilem</button>
    <button class="r"><svg class="i"><use href="#loft"/></svg>Přechod</button></div><div class="c">
    <button class="r"><svg class="i"><use href="#swept"/></svg>Tažená příruba</button>
    <button class="r"><svg class="i"><use href="#bendl"/></svg>Ohyb podle čáry</button>
    <button class="r"><svg class="i"><use href="#zbend"/></svg>Z ohyb</button></div></div><h2>Příruba</h2></div>
  <div class="grp g3"><div class="cols"><div class="c">
    <button class="r"><svg class="i"><use href="#ext"/></svg>Prodloužit přírubu</button>
    <button class="r"><svg class="i"><use href="#taper"/></svg>Zkosení ohybu</button>
    <button class="r"><svg class="i"><use href="#ncut"/></svg>Normálový řez</button></div></div><h2>Úprava</h2></div>
  <div class="grp g4"><div class="cols"><div class="c">
    <button class="r"><svg class="i"><use href="#corner"/></svg>Uzavřít roh</button></div></div><h2>Roh</h2></div>
  <div class="grp g5"><div class="cols"><div class="c w94">
    <button class="r"><svg class="i"><use href="#dimple"/></svg>Důlek</button>
    <button class="r"><svg class="i"><use href="#louver"/></svg>Štěrbina</button>
    <button class="r"><svg class="i"><use href="#punch"/></svg>Děrování</button></div><div class="c">
    <button class="r"><svg class="i"><use href="#vys"/></svg>Vysunout</button>
    <button class="r"><svg class="i"><use href="#dira"/></svg>Díra</button>
    <button class="r dd"><svg class="i"><use href="#merge"/></svg>Sloučit tvary</button></div></div><h2>Tvarování</h2></div>
  <div class="grp g6"><div class="cols"><div class="c w100">
    <button class="r"><svg class="i"><use href="#fold"/></svg>Svinout</button>
    <button class="r"><svg class="i"><use href="#unfold"/></svg>Rozvinout</button>
    <button class="r"><svg class="i"><use href="#smooth"/></svg>Vyhlazený</button></div><div class="c w180">
    <button class="r"><svg class="i"><use href="#linun"/></svg>Lineární rozvinutí</button>
    <button class="r"><svg class="i"><use href="#chb"/></svg>Změnit ohyb</button>
    <button class="r dd"><svg class="i"><use href="#info"/></svg>Zobrazit Info ohybu</button></div><div class="c">
    <button class="r"><svg class="i"><use href="#stat"/></svg>Nastavit stacionární povrch.</button></div></div><h2>Ohyb</h2></div>
  <div class="grp g7"><div class="cols"><div class="c w28">
    <button class="r" aria-label="Konverze tělesa"><svg class="i"><use href="#kv1"/></svg></button>
    <button class="r" aria-label="Nastřižení hran"><svg class="i"><use href="#kv3"/></svg></button>
    <button class="r" aria-label="Označit ohyby"><svg class="i"><use href="#kv4"/></svg></button></div><div class="c">
    <button class="r" aria-label="Konvertovat"><svg class="i"><use href="#kv2"/></svg></button></div></div><h2>Konver...</h2></div>
  <div class="grp g8"><div class="cols"><div class="c w44">
    <button class="r dd" aria-label="Pole"><svg class="i"><use href="#z1"/></svg></button>
    <button class="r dd" aria-label="Zrcadlit"><svg class="i"><use href="#z2"/></svg></button>
    <button class="r dd" aria-label="Zaoblit"><svg class="i"><use href="#z3"/></svg></button></div><div class="c">
    <button class="r" aria-label="Zkosit"><svg class="i"><use href="#z4"/></svg></button></div></div><h2>Základní ...</h2></div>
</section>

<div class="pickbar">
  <span class="grip"></span>
  <button class="ib hot wide" aria-label="Tipy"><svg class="i"><use href="#tip"/></svg></button>
  <button class="ib" aria-label="Přidat"><svg class="i"><use href="#plus"/></svg></button>
  <button class="ib" aria-label="Odebrat"><svg class="i"><use href="#minus"/></svg></button>
  <button class="ib dd" aria-label="Výběr oknem"><svg class="i"><use href="#dash"/></svg></button>
  <button class="ib" aria-label="Výběr polygonem"><svg class="i"><use href="#hex"/></svg></button>
  <span class="vline"></span>
  <button class="ib" aria-label="Filtr"><svg class="i"><use href="#filt"/></svg></button>
  <div class="combo">
    <select aria-label="Filtr výběru" disabled><option></option></select>
    <button class="ib hot" aria-label="Rovina"><svg class="i"><use href="#plane"/></svg></button>
    <select aria-label="Rozsah" disabled><option></option></select>
  </div>
  <svg class="i"><use href="#ref1"/></svg><svg class="i"><use href="#ref2"/></svg>
  <span class="vline"></span>
  <svg class="i"><use href="#lst"/></svg><svg class="i"><use href="#lst"/></svg><svg class="i"><use href="#lstr"/></svg><svg class="i"><use href="#lst"/></svg><svg class="i"><use href="#cur"/></svg><svg class="i"><use href="#sheet"/></svg><svg class="i"><use href="#pick"/></svg><svg class="i"><use href="#globe"/></svg><svg class="i"><use href="#gearl"/></svg>
  <span class="vline"></span>
  <svg class="i"><use href="#ccur"/></svg><svg class="i"><use href="#nn"/></svg><svg class="i"><use href="#sq"/></svg>
  <div class="combo"><select aria-label="Režim výběru" disabled><option>Normála</option></select></div>
  <svg class="i"><use href="#gcur"/></svg><svg class="i"><use href="#gset"/></svg><svg class="i"><use href="#play"/></svg><svg class="i"><use href="#dots"/></svg><svg class="i"><use href="#ln1"/></svg><svg class="i"><use href="#ln2"/></svg><svg class="i"><use href="#cc"/></svg><svg class="i"><use href="#cq"/></svg><svg class="i"><use href="#wv1"/></svg><svg class="i"><use href="#wv2"/></svg><svg class="i"><use href="#arc"/></svg><svg class="i"><use href="#ln1"/></svg><svg class="i"><use href="#srf"/></svg><svg class="i"><use href="#srf"/></svg>
</div>

<main class="work">
  <aside class="left">
    <header class="ph"><span>Konvertovat na plechový díl</span><svg width="14" height="14"><use href="#float"/></svg><svg width="14" height="14"><use href="#close"/></svg></header>
    <div class="lbody">
      <nav class="strip">
        <button class="on" aria-label="Konverze"><svg width="30" height="32"><use href="#conv"/></svg></button>
        <button aria-label="Strom historie"><svg width="30" height="30"><use href="#tree"/></svg></button>
        <button aria-label="Pohledy"><svg width="30" height="30"><use href="#view"/></svg></button>
        <button aria-label="Vizuální"><svg width="30" height="30"><use href="#scene"/></svg></button>
        <button aria-label="Role"><svg width="30" height="30"><use href="#users"/></svg></button>
      </nav>
      <div class="cmd">
        <div class="cmdbar">
          <button class="box" aria-label="OK"><svg class="i"><use href="#ok"/></svg></button>
          <button class="box" aria-label="Zrušit"><svg class="i"><use href="#no"/></svg></button>
          <button class="box" aria-label="Použít"><svg class="i"><use href="#okn"/></svg></button>
          <button class="box push" aria-label="Info"><svg width="16" height="16"><use href="#inf"/></svg></button>
          <button class="box thin" aria-label="Sbalit panel"><svg width="12" height="20"><use href="#col"/></svg></button>
        </div>
        <section class="wizard">
          <h3><svg width="11" height="10"><path d="M0 0h11L6 10z" fill="#454c56"/></svg>Průvodce konverzí</h3>
          <div class="wz"><button>Nastřižení</button><button class="mark">Označit ohyby</button></div>
        </section>
      </div>
    </div>
  </aside>

  <section class="center">
    <div class="doctabs">
      <div class="dtab">* Cover X9-14.Z3PRT<svg width="13" height="12"><path d="M1 1l11 10M12 1L1 11" stroke="#87713d" stroke-width="3"/></svg></div>
      <button class="ib" aria-label="Nový dokument"><svg width="13" height="13"><path d="M6.500 0v13M0 6.500h13" stroke="#a39e9e" stroke-width="3"/></svg></button>
      <button class="ib end" aria-label="Seznam dokumentů"><svg width="11" height="11"><path d="M0 1h11" stroke="#8d8787" stroke-width="2"/><path d="M0 5h11l-6 6z" fill="#8d8787"/></svg></button>
    </div>
    <div class="canvas">
      <svg class="scene" viewBox="450 240 1053 744" preserveAspectRatio="xMidYMid meet" role="img" aria-label="Model">
        <g stroke="#1a1f22" stroke-width="1.200" stroke-linejoin="round">
          <path d="M735 573L1332 558l1 3-60 57-19-1 36-33-2-2-558 14-39 38h-19z" fill="#829aa6"/>
          <path d="M1254 617h19l6 12h-18z" fill="#93b0bd"/>
          <path d="M672 633h19l14 20-14 5z" fill="#93b0bd"/>
          <path d="M691 657l54-15 9 14-40 1-22 2z" fill="#829aa6"/>
          <path d="M745 642l600-15 25 34-564 14-21 20z" fill="#93b0bd"/>
          <path d="M806 675l599-15v3l-21 19-599 13z" fill="#829aa6"/>
          <path d="M735 575l597-14M674 635l62-60M691 633h-18M674 636l17 20M694 656l51-12M748 645l39 48M806 677l597-14M787 693l19-17M745 644l596-15M1289 585l-35 33M1255 620l7 10" fill="none" stroke-width="1"/>
        </g>
        <g fill="none" stroke="#20282c" stroke-width="1.200">
          <ellipse cx="734" cy="585" rx="3" ry="1.500" transform="rotate(-35 734 585)"/><ellipse cx="1312" cy="571" rx="3" ry="1.500" transform="rotate(-35 1312 571)"/>
          <path d="M765 651h4l29 28-3 3zM772 651h4l27 26-3 2zM779 651h4l25 24-3 1zM787 651h4l24 23h-4zM794 651h4l22 23h-4z" fill="#6d8793"/>
          <path d="M1310 638h5l9 23h-5zM1317 638h5l9 23h-5zM1324 638h5l9 23h-5zM1332 638h4l9 23h-4zM1339 638h4l9 22h-4z" fill="#5d7783"/>
        </g>
        <path d="M1024 606l37 0 38 55-47 45-36 1-39-55z" fill="#a8680f" fill-opacity=".06" stroke="#a9813f" stroke-opacity=".35"/>
        <path d="M996 632l28-26h37l19 27M1069 691l-17 15-36 1-12-17" fill="none" stroke="#b06c0c" stroke-width="1.200"/>
        <g fill="none"><path d="M1063 662l-48-70" stroke="#67649a" stroke-width="2"/><path d="M1044 635l-29-42" stroke="#4a3bd0" stroke-width="2"/><path d="M1044 635l-29-42" stroke="#a3521c"/><path d="M1013 588l-18-24M998 722l-22 22" stroke="#a38457"/><path d="M1063 662l47-1" stroke="#b3765f" stroke-width="1.500"/><path d="M1110 661h34" stroke="#a09a86"/><path d="M1063 662l-31 28" stroke="#7d9143" stroke-width="1.500"/><path d="M1032 690l-32 31" stroke="#6aa51d" stroke-width="2"/></g>
        <path d="M1003 577l13 11-6 5z" fill="#7580bd"/><path d="M1008 590l4-3 5 1-2 4-3 1-1-3z" fill="#1414d8"/>
        <path d="M986 553l10 9-5 4z" fill="#cf7c0a"/><path d="M996 560l-6 5 6 0z" fill="#482c06"/>
        <path d="M991 731l5-12 8 2-2 6z" fill="#1fa02a"/><path d="M998 718l7 1-2 5z" fill="#0b5315"/>
        <path d="M969 752l6-11 6 4-2 4z" fill="#b16a08"/><path d="M975 740l6 2-1 5z" fill="#553407"/>
        <circle cx="1111" cy="661" r="4" fill="#d98a8a"/><path d="M1109 658l4-1 4 4-4 3z" fill="#ee2222"/><path d="M1113 659l5 2-5 3z" fill="#4a1010"/>
        <circle cx="1128" cy="660" r="3" fill="#b5a37e"/><path d="M1127 657l5 3-3 3z" fill="#e18a10"/><path d="M1145 658l3-5M1139 653l2 1" stroke="#a86b14" stroke-width="2"/>
        <g class="axis"><text x="971" y="548" fill="#a9660c">Z</text><text x="953" y="769" fill="#a9660c">Y</text><text x="490" y="829" fill="#1414f0">Z</text><text x="570" y="887" fill="#f01818">X</text><text x="481" y="936" fill="#22c522">Y</text></g>
        <path d="M537 880l-31-43" stroke="#0808f4" stroke-width="2"/><path d="M501 830l9 6-4 5z" fill="#1717d0"/><path d="M510 836l-5 5 2 0z" fill="#05054a"/>
        <path d="M537 881h26" stroke="#f80808" stroke-width="2"/><path d="M567 876l5 4-5 4z" fill="#5a0606"/><circle cx="565" cy="880" r="3.500" fill="#f82020"/>
        <path d="M537 881l-37 36" stroke="#22cf22" stroke-width="2"/><path d="M492 923l5-9 6 1-1 5z" fill="#16891f"/>
      </svg>
      <div class="over">
        <div class="viewbar">
          <button class="ib" aria-label="Konec"><svg class="i"><use href="#exit"/></svg></button>
          <button class="ib dd" aria-label="Pohled"><svg class="i"><use href="#vcube"/></svg></button>
          <button class="ib" aria-label="Guma"><svg class="i"><use href="#eraser"/></svg></button>
          <button class="ib" aria-label="Řez"><svg class="i"><use href="#sec"/></svg></button>
          <button class="ib dd" aria-label="Stínování"><svg class="i"><use href="#shade"/></svg></button>
          <button class="ib dd" aria-label="Drátový"><svg class="i"><use href="#wire"/></svg></button>
          <button class="ib dd" aria-label="Hrany"><svg class="i"><use href="#hcube"/></svg></button>
          <button class="ib dd" aria-label="Zvětšit"><svg class="i"><use href="#zoomf"/></svg></button>
          <button class="ib dd" aria-label="Cíl"><svg class="i"><use href="#target"/></svg></button>
          <button class="ib" aria-label="Mapa"><svg class="i"><use href="#map"/></svg></button>
          <button class="ib dd" aria-label="Kóty"><svg class="i"><use href="#dim"/></svg></button>
          <button class="ib dd" aria-label="Obrazovka"><svg class="i"><use href="#mon"/></svg></button>
          <button class="sw black" aria-label="Barva hran"></button>
          <button class="sw sky" aria-label="Barva pozadí"></button>
          <button class="ib dd" aria-label="Hladiny"><svg class="i"><use href="#layers"/></svg></button>
          <label class="level"><svg width="30" height="18"><circle cx="6" cy="6" r="4" fill="#fafafa" stroke="#aaa"/><path d="M4 10h4v5H4z" fill="#ddd" stroke="#aaa"/><circle cx="23" cy="9" r="6" fill="#e4e4e4" stroke="#aaa"/></svg><select aria-label="Hladina" disabled><option>Hladina000</option></select></label>
        </div>
        <p>&lt;střední-klik&gt; pro pokračování.</p>
        <p>&lt;Shift-pravý-klik&gt; pro zobrazení filtru výběru.</p>
        <div class="scale">1071.5mm</div>
      </div>
    </div>
  </section>

  <aside class="right">
    <header class="ph"><span>Prohlížeč souborů</span><svg width="14" height="14"><use href="#float"/></svg><svg width="14" height="14"><use href="#close"/></svg></header>
    <div class="rbody">
      <div class="files">
        <div class="fbar">
          <button class="nav" disabled aria-label="Zpět"><svg class="i"><use href="#arr"/></svg></button>
          <button class="nav" disabled aria-label="Vpřed"><svg class="i flip"><use href="#arr"/></svg></button>
          <button class="nav" disabled aria-label="Nahoru"><svg class="i up"><use href="#arr"/></svg></button>
          <button class="nav act" aria-label="Obnovit"><svg width="22" height="20"><use href="#refr"/></svg></button>
        </div>
        <ul class="ftree">
          <li><svg width="7" height="10"><path d="M1 1l5 4-5 4" fill="none" stroke="#777" stroke-width="1.500"/></svg><svg class="i"><use href="#star"/></svg>Oblíbené</li>
          <li><svg width="7" height="10"><path d="M1 1l5 4-5 4" fill="none" stroke="#777" stroke-width="1.500"/></svg><svg class="i"><use href="#folder"/></svg>(C:)</li>
        </ul>
        <h3 class="sec"><svg width="9" height="12"><path d="M0 0v12l9-6z" fill="#454c56"/></svg>Hledat</h3>
        <h3 class="sec"><svg width="9" height="12"><path d="M0 0v12l9-6z" fill="#454c56"/></svg>Seznam souborů</h3>
        <h3 class="sec"><svg width="9" height="12"><path d="M0 0v12l9-6z" fill="#454c56"/></svg>Náhled</h3>
        <div class="fill"></div>
      </div>
      <nav class="strip rs">
        <button class="on" aria-label="Soubory"><svg width="30" height="26"><use href="#folder"/></svg></button>
        <button aria-label="Knihovna"><svg width="30" height="30"><use href="#fbolt"/></svg></button>
        <button aria-label="Hladiny"><svg width="30" height="26"><use href="#layers"/></svg></button>
        <button aria-label="Materiály"><svg width="30" height="28"><use href="#fball"/></svg></button>
        <button aria-label="Barvy"><svg width="30" height="26"><use href="#rgb"/></svg></button>
      </nav>
    </div>
    <header class="ph out"><span>Výstup</span><svg width="11" height="11"><rect width="10" height="10" fill="#222"/></svg><svg width="14" height="14"><use href="#float"/></svg><svg width="14" height="14"><use href="#close"/></svg></header>
    <div class="log">
      <div class="lines"><p class="note">POZNÁMKA: [Cover X9-14.STEP] úspěšně importováno.</p><p class="note">POZNÁMKA: [Cover X9-14.Z3PRT] záložní soubor byl úspěšně vytvořen.</p><p>Konvertovat na plechový díl.</p></div>
      <div class="sb"><svg width="8" height="5"><path d="M0 5h8L4 0z" fill="#444"/></svg><span class="thumb"><i></i><i></i><i></i></span><svg width="8" height="5"><path d="M0 0h8L4 5z" fill="#444"/></svg></div>
    </div>
  </aside>
</main>

<footer class="status">
  <span>&lt;střední-klik&gt; pro dokončení.</span>
  <div class="sbtn">
    <button class="hot" aria-label="Správce"><svg class="i"><use href="#s1"/></svg></button>
    <button class="hot" aria-label="Obrazovka"><svg class="i"><use href="#s2"/></svg></button>
    <button class="hot" aria-label="Výstup"><svg class="i"><use href="#s3"/></svg></button>
  </div>
  <div class="sinfo"></div>
</footer>
</body>
</html>
```
FILE: styles.css
```css
* { box-sizing: border-box; }
:root { --line: #b9bdc8; --bg: #e1e5e8; --pane: #dce0e9; --lite: #fcfcfc; }
body { margin: 0; height: 100vh; min-height: 720px; display: flex; flex-direction: column; overflow: hidden; background: var(--bg); font: 14px/20px "Open Sans", "Noto Sans", sans-serif; color: #1c1c1c; }
h1, h2, h3, p, ul { margin: 0; padding: 0; font: inherit; list-style: none; }
button, input, select { font: inherit; color: inherit; margin: 0; padding: 0; border: 0; background: none; border-radius: 0; }
button, label { white-space: nowrap; }
svg { display: block; flex: none; }
.sprite { position: absolute; width: 0; height: 0; }
.i { width: 20px; height: 20px; }
.ib { display: flex; align-items: center; flex: none; }
.dd::after { content: ""; border: 4px solid transparent; border-top: 5px solid #4a4a4a; border-bottom: 0; }
.ib.dd { gap: 6px; }
.vline { width: 1px; height: 20px; background: #b5b9be; }
.hot { background: #ffe27a; border: 1px solid #c4973a; }

.titlebar { display: flex; align-items: center; height: 32px; padding: 0 2px 0 5px; flex: none; }
.qat { display: flex; align-items: center; gap: 8px; width: 330px; flex: none; }
.qat .vline { margin: 0 1px 0 -4px; height: 13px; }
.menu { display: flex; gap: 18px; padding: 2px 0 0 1px; color: #000; }
.doc { margin-left: auto; padding-top: 2px; color: #8b8d8f; white-space: nowrap; }
.wctl { display: flex; align-items: center; justify-content: flex-end; gap: 16px; width: 293px; flex: none; }

.tabs { display: flex; height: 28px; padding-left: 1px; border-bottom: 1px solid var(--line); color: #444; flex: none; }
.file { width: 91px; height: 26px; margin: 1px 2px 0 0; background: #3470cb; border: 1px solid #1d58b4; color: #fff; flex: none; }
.tablist { display: flex; gap: 1px; }
.tablist button { padding: 0 12px; height: 27px; }
.tablist .on { height: 28px; background: var(--lite); border: 1px solid var(--line); border-bottom: 0; color: #53627a; }
.tabend { margin-left: auto; display: flex; align-items: center; gap: 10px; }
.search { display: flex; align-items: center; width: 180px; height: 26px; padding: 0 6px 0 2px; background: #fff; border: 1px solid var(--line); }
.search input { flex: 1; min-width: 0; outline: 0; }
.search input::placeholder { color: #7d7d7d; opacity: 1; }

.ribbon { display: flex; height: 119px; background: var(--lite); border-bottom: 1px solid var(--line); flex: none; margin-left: 1px; }
.grp { display: flex; flex-direction: column; padding: 5px 0 0 8px; margin-bottom: 3px; border-right: 1px solid #cfd2d8; flex: none; }
.g1 { width: 165px; } .g2 { width: 304px; } .g3 { width: 163px; } .g4 { width: 115px; } .g5 { width: 233px; } .g6 { width: 505px; } .g7 { width: 67px; } .g8 { width: 83px; }
.g1 .r { padding-left: 3px; }
.g7, .g8 { padding-left: 9px; }
.cols { display: flex; height: 87px; flex: none; }
.w152 { width: 152px; } .w94 { width: 94px; } .w100 { width: 100px; } .w180 { width: 180px; } .w28 { width: 28px; } .w44 { width: 44px; }
.r { display: flex; align-items: center; gap: 4px; height: 29px; }
.r.dd::after { margin-left: 5px; }
.g8 .r.dd::after { margin-left: 2px; }
.sel { background: #ffebae; border: 1px solid #edd076; padding-right: 6px; }
.grp h2 { height: 23px; margin-left: -8px; line-height: 23px; text-align: center; color: #667080; }

.pickbar { display: flex; align-items: center; gap: 8px; height: 34px; padding: 2px 0 0 4px; overflow: hidden; flex: none; }
.pickbar > * { flex: none; }
.grip { width: 2px; height: 19px; margin-right: -2px; background: repeating-linear-gradient(#808890 0 2px, transparent 2px 5px); }
.pickbar .hot { width: 27px; height: 26px; justify-content: center; }
.pickbar .wide { margin-right: -4px; }
.combo { display: flex; gap: 2px; margin: 0 -3px 0 -4px; }
select { appearance: none; width: 165px; height: 26px; padding: 0 3px; border: 1px solid #ccd4de; opacity: 1; color: #777; }
.combo select, .level { background: linear-gradient(45deg, transparent 50%, #aaa 50%) no-repeat calc(100% - 10px) 11px / 4px 4px, linear-gradient(-45deg, transparent 50%, #aaa 50%) no-repeat calc(100% - 6px) 11px / 4px 4px, #efefef; }

.work { display: flex; flex: 1; min-height: 0; }
.ph { display: flex; align-items: center; gap: 10px; height: 26px; padding: 0 8px 0 5px; color: #444; flex: none; }
.ph span { flex: 1; }
.left { width: 447px; display: flex; flex-direction: column; flex: none; border-right: 1px solid var(--line); }
.lbody { display: flex; flex: 1; border-top: 1px solid var(--line); border-bottom: 1px solid var(--line); margin-left: 2px; }
.strip { display: flex; flex-direction: column; width: 37px; border-right: 1px solid var(--line); flex: none; }
.strip button { display: flex; align-items: center; justify-content: center; height: 60px; padding-bottom: 3px; }
.strip .on { background: var(--lite); border: 1px solid var(--line); border-top: 0; border-right: 0; margin-right: -1px; }
.cmd { flex: 1; padding: 3px 4px 3px 3px; background: linear-gradient(var(--bg) 36px, var(--pane) 0); }
.cmdbar { display: flex; gap: 2px; margin-bottom: 5px; }
.box { display: flex; align-items: center; justify-content: center; width: 33px; height: 29px; background: #fff; border: 1px solid var(--line); }
.push { margin-left: auto; }
.thin { width: 17px; }
.wizard { margin: 0 1px 0 2px; border: 1px solid var(--line); }
.wizard h3 { display: flex; align-items: center; gap: 7px; height: 29px; padding-left: 4px; background: var(--lite); border-bottom: 1px solid var(--line); font-weight: 600; color: #333; }
.wz { display: flex; flex-direction: column; padding: 4px 9px 0; }
.wz button { height: 29px; background: var(--lite); border: 1px solid var(--line); color: #000; }
.wz .mark { height: 35px; border: 5px solid #ed1c24; margin-bottom: -1px; }

.center { flex: 1; min-width: 0; display: flex; flex-direction: column; margin-left: 1px; border-left: 1px solid var(--line); border-right: 1px solid var(--line); }
.doctabs { display: flex; align-items: center; gap: 8px; height: 27px; padding-right: 6px; border-bottom: 1px solid var(--line); flex: none; }
.dtab { display: flex; align-items: center; justify-content: flex-end; gap: 8px; width: 214px; height: 27px; padding-right: 18px; background: var(--lite); border: 1px solid var(--line); border-bottom: 0; color: #000; flex: none; }
.end { margin-left: auto; }
.canvas { flex: 1; min-height: 0; display: grid; margin: 0 1px 1px; background: linear-gradient(#fff, #9f9f9f); border-bottom: 1px solid var(--line); }
.canvas > * { grid-area: 1 / 1; min-height: 0; min-width: 0; }
.scene { width: 100%; height: 100%; }
.axis { font-size: 20px; }
.over { display: flex; flex-direction: column; padding-top: 2px; color: #111; }
.scale { margin-top: auto; padding-left: 4px; font-size: 19px; line-height: 24px; }
.viewbar { display: flex; align-items: center; justify-content: center; gap: 10px; height: 26px; padding-left: 6px; }
.over p { height: 26px; line-height: 26px; padding-left: 21px; }
.viewbar + p { margin-top: -3px; }
.sw { width: 20px; height: 20px; border: 1px solid #111; }
.black { height: 11px; background: #000; border-color: #666; }
.sky { background: #bee6f6; }
.level { display: flex; align-items: center; width: 144px; height: 26px; margin-left: -4px; padding-left: 10px; gap: 2px; border: 1px solid #d2dae2; }
.level select { border: 0; width: 84px; background: none; }

.right { width: 407px; display: flex; flex-direction: column; flex: none; margin-left: 1px; border-left: 1px solid var(--line); }
.right .ph { padding: 0 1px 0 5px; }
.rbody { display: flex; flex: 1; min-height: 0; border-top: 1px solid var(--line); }
.files { flex: 1; display: flex; flex-direction: column; min-width: 0; }
.fbar { display: flex; gap: 4px; padding: 1px 2px 3px; }
.nav { display: flex; align-items: center; justify-content: center; width: 35px; height: 31px; background: #e9ebec; border: 1px solid #cfd3d8; }
.act { background: #fff; border-color: var(--line); }
.flip { transform: rotate(180deg); }
.up { transform: rotate(90deg); }
.ftree { height: 104px; margin: 0 2px 7px; border: 1px solid var(--line); background: repeating-linear-gradient(#fff 0 23px, #f5f5f5 23px 46px); color: #111; }
.ftree li { display: flex; align-items: center; height: 23px; padding-left: 6px; gap: 3px; }
.ftree li svg + svg { margin-left: 6px; width: 20px; height: 18px; }
.sec { display: flex; align-items: center; gap: 7px; height: 30px; margin: 2px 2px 0; padding-left: 6px; border: 1px solid var(--line); background: var(--lite); font-weight: 600; color: #333; }
.fill { flex: 1; margin-top: 2px; background: var(--pane); border-bottom: 1px solid var(--line); }
.rs { width: 29px; border: 0; border-left: 1px solid var(--line); overflow: hidden; }
.rs button { justify-content: flex-start; padding-left: 2px; }
.rs .on { margin: 0; border-left: 0; }
.out { height: 30px; }
.right .out { padding-top: 2px; }
.log { display: flex; height: 87px; margin-left: 2px; background: #fff; border: 1px solid var(--line); border-right: 0; flex: none; }
.lines { flex: 1; padding: 2px 3px; color: #000; }
.note { color: #0d700d; }
.sb { width: 14px; display: flex; flex-direction: column; align-items: center; justify-content: space-between; padding: 9px 0; background: var(--pane); }
.thumb { display: flex; flex-direction: column; gap: 2px; justify-content: center; align-items: center; width: 14px; height: 21px; margin-top: 22px; background: #fff; border: 1px solid #9aa3b3; }
.thumb i { width: 6px; height: 1px; background: #555; }

.status { display: flex; height: 29px; padding: 3px 0 0 6px; color: #444; flex: none; }
.status span { flex: 1; line-height: 29px; }
.sbtn { display: flex; gap: 9px; width: 123px; padding: 1px 0 0 17px; border-left: 1px solid #777; flex: none; }
.sbtn button { display: flex; align-items: center; justify-content: center; width: 26px; height: 25px; }
.sinfo { width: 431px; background: #fff; border: 1px solid var(--line); flex: none; }
```
